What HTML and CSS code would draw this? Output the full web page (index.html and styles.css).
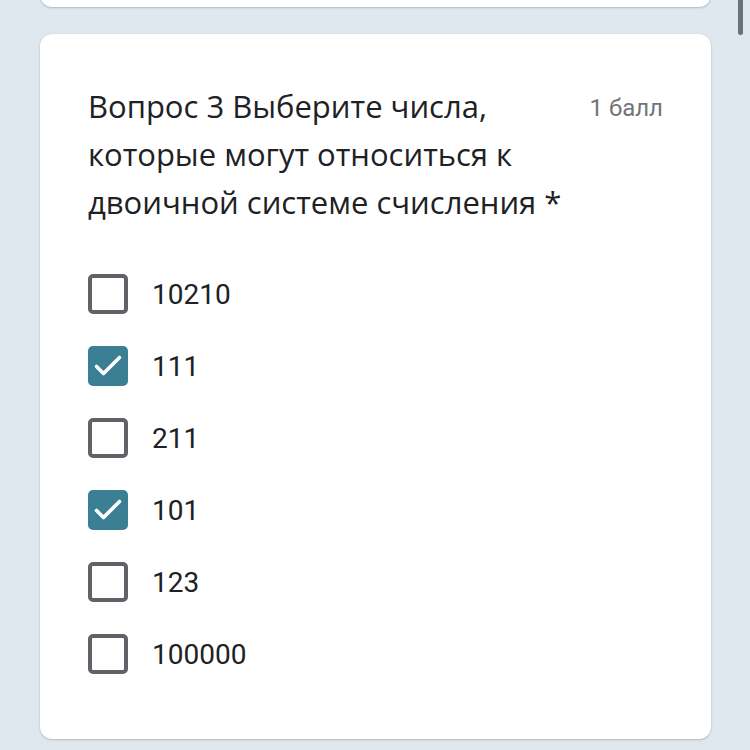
FILE: index.html
```html
<!DOCTYPE html>
<html lang="ru">
<head>
<meta charset="utf-8">
<link rel="stylesheet" href="styles.css">
</head>
<body>
<div class="page">
  <div class="card card-prev"></div>
  <div class="card">
    <div class="head">
      <div class="title">Вопрос 3 Выберите числа, которые могут относиться к двоичной системе счисления *</div>
      <div class="points">1 балл</div>
    </div>
    <ul class="options">
      <li class="opt"><span class="box"></span><span class="label">10210</span></li>
      <li class="opt"><span class="box checked"><svg viewBox="0 0 40 40" width="40" height="40"><path d="M8.5 20.5l7 7L31.5 11.5" fill="none" stroke="#fff" stroke-width="3.6" stroke-linecap="round" stroke-linejoin="round"/></svg></span><span class="label">111</span></li>
      <li class="opt"><span class="box"></span><span class="label">211</span></li>
      <li class="opt"><span class="box checked"><svg viewBox="0 0 40 40" width="40" height="40"><path d="M8.5 20.5l7 7L31.5 11.5" fill="none" stroke="#fff" stroke-width="3.6" stroke-linecap="round" stroke-linejoin="round"/></svg></span><span class="label">101</span></li>
      <li class="opt"><span class="box"></span><span class="label">123</span></li>
      <li class="opt"><span class="box"></span><span class="label">100000</span></li>
    </ul>
  </div>
</div>
<div class="scrollbar"></div>
</body>
</html>
```
FILE: styles.css
```css
html, body {
  margin: 0;
  padding: 0;
  background: #dfe8ee;
  width: 750px;
  height: 750px;
  overflow: hidden;
}
body {
  font-family: Roboto, "Noto Sans", sans-serif;
  color: #202124;
}
.page {
  display: flex;
  flex-direction: column;
  gap: 27px;
  padding-left: 40px;
  width: 671px;
}
.card {
  background: #fff;
  border-radius: 12px;
  box-shadow: 0 1px 2px rgba(60, 64, 67, 0.25), 0 0 1px rgba(60, 64, 67, 0.2);
  padding: 48px 48px 49px 48px;
}
.card-prev {
  height: 40px;
  padding: 0;
  margin-top: -33px;
}
.head {
  display: flex;
  justify-content: space-between;
  align-items: flex-start;
}
.title {
  width: 492px;
  font-family: "Open Sans", Roboto, sans-serif;
  font-size: 31px;
  line-height: 48px;
  color: #202124;
}
.points {
  font-size: 24px;
  line-height: 48px;
  color: #70757a;
  margin-top: 2px;
}
.options {
  list-style: none;
  margin: 32px 0 0 0;
  padding: 0;
  display: flex;
  flex-direction: column;
}
.opt {
  display: flex;
  align-items: center;
  height: 72px;
  gap: 24px;
}
.box {
  width: 40px;
  height: 40px;
  box-sizing: border-box;
  border: 4px solid #5f6368;
  border-radius: 5px;
  flex: none;
}
.box.checked {
  border: none;
  background: #3b7f94;
}
.box svg {
  display: block;
}
.label {
  font-size: 28px;
  color: #202124;
}
.scrollbar {
  position: absolute;
  left: 738px;
  top: 0;
  width: 5px;
  height: 35px;
  background: #6b7276;
  border-radius: 0 0 3px 3px;
}
```
